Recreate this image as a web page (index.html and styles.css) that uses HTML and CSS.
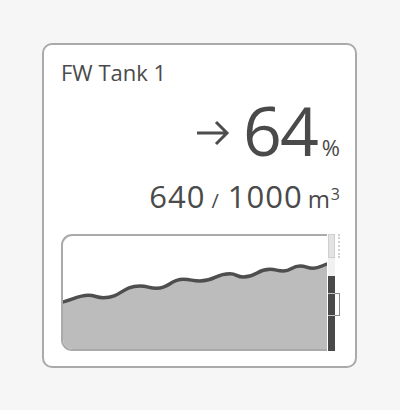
FILE: index.html
```html
<!DOCTYPE html>
<html lang="en">
<head>
    <meta charset="UTF-8">
    <meta name="viewport" content="width=device-width, initial-scale=1.0">
    <title>FW Tank 1</title>
    <link rel="stylesheet" href="styles.css">
</head>
<body>
    <div class="card">
        <div class="title">FW Tank 1</div>

        <!-- Level in percent with trend arrow -->
        <div class="value-row">
            <svg class="trend" width="34" height="28" viewBox="0 0 34 28">
                <path d="M1 14 H31 M20 3 L31 14 L20 25" fill="none" stroke="#4d4d4d" stroke-width="3"/>
            </svg>
            <span class="pct"><span class="num">64</span><span class="unit">%</span></span>
        </div>

        <!-- Volume -->
        <div class="volume">640<span class="sep">/</span>1000<span class="m">m<sup>3</sup></span></div>

        <!-- History chart and level gauge -->
        <div class="chart-row">
            <div class="chart">
                <svg viewBox="0 0 264 113" preserveAspectRatio="none">
                    <path class="area" d="M-2 66.5 C10 64, 15 59.3, 25.3 59.3 C32.8 59.3, 32.8 61.7, 40.3 61.7 C58.6 61.7, 58.6 50, 77 50 C85.3 50, 85.3 52.3, 93.7 52.3 C107 52.3, 107 43.3, 120.3 43.3 C128.6 43.3, 128.6 45, 137 45 C152 45, 152 37.7, 167 37.7 C173.6 37.7, 173.6 41, 180.3 41 C193.6 41, 193.6 33.3, 207 33.3 C213.6 33.3, 213.6 35, 220.3 35 C228.6 35, 228.6 30, 237 30 C243.6 30, 243.6 32.3, 250.3 32.3 C257 32.3, 259 29, 266 27.5 L266 115 L-2 115 Z"/>
                    <path class="line" d="M-2 66.5 C10 64, 15 59.3, 25.3 59.3 C32.8 59.3, 32.8 61.7, 40.3 61.7 C58.6 61.7, 58.6 50, 77 50 C85.3 50, 85.3 52.3, 93.7 52.3 C107 52.3, 107 43.3, 120.3 43.3 C128.6 43.3, 128.6 45, 137 45 C152 45, 152 37.7, 167 37.7 C173.6 37.7, 173.6 41, 180.3 41 C193.6 41, 193.6 33.3, 207 33.3 C213.6 33.3, 213.6 35, 220.3 35 C228.6 35, 228.6 30, 237 30 C243.6 30, 243.6 32.3, 250.3 32.3 C257 32.3, 259 29, 266 27.5"/>
                </svg>
            </div>
            <div class="gauge">
                <div class="seg high" style="height: 24px"></div>
                <div class="seg empty" style="height: 18px"></div>
                <div class="seg fill" style="height: 17px"></div>
                <div class="seg fill split" style="height: 22px"></div>
                <div class="seg fill split" style="height: 36px"></div>
            </div>
            <div class="marks">
                <div class="mark-high" style="height: 24px"></div>
                <div class="mark-low" style="margin-top: 35px; height: 23px"></div>
            </div>
        </div>
    </div>
</body>
</html>
```

FILE: styles.css
```css
body {
    margin: 0;
    background-color: #f6f6f6;
    font-family: "Open Sans", "DejaVu Sans", sans-serif;
    color: #4a4a4a;
}
.card {
    box-sizing: border-box;
    width: 315px;
    height: 325px;
    margin: 43px 0 0 42px;
    padding: 13px 15px 0 17px;
    background-color: #fff;
    border: 2px solid #aaa;
    border-radius: 10px;
}
.title {
    font-size: 22px;
    line-height: 28px;
}
.value-row {
    display: flex;
    justify-content: flex-end;
    align-items: flex-start;
    height: 68px;
    margin-top: 10px;
}
.trend {
    display: block;
    margin-top: 23px;
    margin-right: 13px;
}
.pct {
    font-size: 68px;
    line-height: 68px;
}
.pct .num {
    letter-spacing: -2px;
}
.pct .unit {
    font-size: 22px;
    line-height: 1;
    margin-left: 5px;
}
.volume {
    margin-top: 14px;
    text-align: right;
    font-size: 31px;
    line-height: 36px;
    letter-spacing: 1px;
}
.volume .sep {
    font-size: 20px;
    margin: 0 8px 0 6px;
}
.volume .m {
    font-size: 24px;
    margin-left: 5px;
    letter-spacing: 0;
}
.volume sup {
    font-size: 16px;
    line-height: 1;
    vertical-align: 8px;
    margin-left: 1px;
}
.chart-row {
    display: flex;
    height: 117px;
    margin-top: 15px;
}
.chart {
    flex: 1;
    border: 2px solid #aaa;
    border-right: none;
    border-radius: 11px 0 0 11px;
    overflow: hidden;
}
.chart svg {
    display: block;
    width: 100%;
    height: 100%;
}
.chart .area {
    fill: #bcbcbc;
}
.chart .line {
    fill: none;
    stroke: #4e4e4e;
    stroke-width: 3.5;
}
.gauge {
    display: flex;
    flex-direction: column;
    width: 7px;
    margin-left: 1px;
}
.seg {
    box-sizing: border-box;
}
.seg.high {
    background-color: #e3e3e3;
    border: 1px solid #cfcfcf;
}
.seg.empty {
    background-color: #f1f1f1;
}
.seg.fill {
    background-color: #494949;
}
.seg.split {
    border-top: 1px solid #c4c4c4;
}
.marks {
    width: 5px;
}
.mark-high {
    box-sizing: border-box;
    border-right: 2px dotted #d0d0d0;
}
.mark-low {
    box-sizing: border-box;
    border: 1px solid #8a8a8a;
    border-left: none;
}
```
